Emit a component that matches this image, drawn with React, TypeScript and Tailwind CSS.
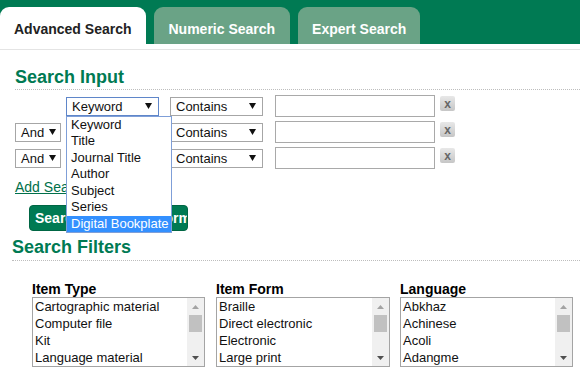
import React from "react";

const GREEN = "bg-[#007a53]";

function Tri({ className = "" }: { className?: string }) {
  return (
    <svg width="7" height="6" viewBox="0 0 7 6" className={className}>
      <path d="M0 0 H7 L3.5 6 Z" fill="#111" />
    </svg>
  );
}

function Select({
  label,
  w,
  focused = false,
  pr = "pr-[6px]",
}: {
  label: string;
  w: string;
  focused?: boolean;
  pr?: string;
}) {
  return (
    <div
      className={`${w} h-[19px] flex items-center justify-between bg-white border ${
        focused ? "border-[#5f86c9]" : "border-[#a6a6a6]"
      } pl-[5px] ${pr} text-[13px] leading-[15px] text-[#111]`}
    >
      <span>{label}</span>
      <Tri />
    </div>
  );
}

function XBtn() {
  return (
    <div className="w-[15px] h-[15px] self-start mt-[1px] rounded-[2px] bg-gradient-to-b from-[#e8e8e8] to-[#c6c6c6] flex items-center justify-center text-[12px] font-bold leading-none text-[#666]">
      x
    </div>
  );
}

function Row({ first, children }: { first?: React.ReactNode; children?: React.ReactNode }) {
  return (
    <div className="flex items-center h-[22px] relative">
      <div className="w-[51px] flex">{first}</div>
      {children}
    </div>
  );
}

function RowRest() {
  return (
    <>
      <div className="ml-[11px]">
        <Select label="Contains" w="w-[93px]" />
      </div>
      <div className="ml-[12px] w-[160px] h-[22px] border border-[#a9a9a9] bg-white" />
      <div className="ml-[5px] self-stretch flex">
        <XBtn />
      </div>
    </>
  );
}

function ListBox({ items, className = "" }: { items: string[]; className?: string }) {
  return (
    <div className={`w-[173px] h-[70px] border border-[#a4a4a4] flex bg-white ${className}`}>
      <div className="flex-1 pl-[2px] text-[13px] text-[#111]">
        {items.map((t) => (
          <div key={t} className="h-[17px] leading-[17px] whitespace-nowrap">
            {t}
          </div>
        ))}
      </div>
      <div className="w-[17px] bg-[#f0f0f0] flex flex-col items-center">
        <div className="h-[17px] flex items-center justify-center">
          <svg width="7" height="4" viewBox="0 0 7 4">
            <path d="M0 4 L3.5 0 L7 4 Z" fill="#a3a3a3" />
          </svg>
        </div>
        <div className="w-[13px] h-[17px] bg-[#c1c1c1]" />
        <div className="flex-1" />
        <div className="h-[17px] flex items-center justify-center">
          <svg width="7" height="4" viewBox="0 0 7 4">
            <path d="M0 0 L7 0 L3.5 4 Z" fill="#505050" />
          </svg>
        </div>
      </div>
    </div>
  );
}

export default function App() {
  const options = ["Keyword", "Title", "Journal Title", "Author", "Subject", "Series", "Digital Bookplate"];
  return (
    <div className="w-[580px] h-[386px] overflow-hidden bg-white font-['Liberation_Sans',Arial,sans-serif] text-[#111]">
      <div className={`h-[44px] ${GREEN} flex items-end gap-[8px]`}>
        <div className="h-[37px] px-[14px] pt-[14px] rounded-t-[9px] bg-white text-[#222] font-bold text-[14px] leading-[16px]">
          Advanced Search
        </div>
        <div className="h-[37px] px-[15px] pt-[14px] rounded-t-[9px] bg-[#6aa386] text-white font-bold text-[14px] leading-[16px]">
          Numeric Search
        </div>
        <div className="h-[37px] px-[14px] pt-[14px] rounded-t-[9px] bg-[#6aa386] text-white font-bold text-[14px] leading-[16px]">
          Expert Search
        </div>
      </div>
      <div className="h-[5px]" />
      <div className="h-px bg-[#e4e4e4]" />

      <div className="pl-[15px]">
        <h2 className="mt-[17px] text-[18px] leading-[21px] font-bold text-[#007a53] pb-[1px] border-b border-dotted border-[#bdbdbd]">
          Search Input
        </h2>

        <div className="mt-[5px] flex flex-col gap-[4px]">
          <Row>
            <div className="relative">
              <Select label="Keyword" w="w-[93px]" focused />
              <div className="absolute left-0 top-[19px] z-10 w-[106px] bg-white border border-[#7f9fd8] text-[13px] text-[#111]">
                {options.map((o, i) => (
                  <div
                    key={o}
                    className={`h-[16.5px] leading-[16.5px] pl-[4px] whitespace-nowrap ${
                      i === options.length - 1 ? "bg-[#3390ff] text-white" : ""
                    }`}
                  >
                    {o}
                  </div>
                ))}
              </div>
            </div>
            <RowRest />
          </Row>
          <Row first={<Select label="And" w="w-[46px]" pr="pr-[4px]" />}>
            <Select label="Title" w="w-[93px]" />
            <RowRest />
          </Row>
          <Row first={<Select label="And" w="w-[46px]" pr="pr-[4px]" />}>
            <Select label="Author" w="w-[93px]" />
            <RowRest />
          </Row>
        </div>

        <div className="mt-[10px] text-[14px] leading-[16px] text-[#00704a] underline">
          Add Search Row
        </div>

        <div className="mt-[10px] ml-[14px] flex">
          <div className="h-[26px] w-[159px] rounded-[4px] bg-[#007a53] border border-[#006644] text-white font-bold text-[14px] leading-[24px] pl-[5px] whitespace-nowrap overflow-hidden">
            Search Advanced Form
          </div>
        </div>

        <h2 className="mt-[6px] -ml-[3px] text-[18px] leading-[21px] font-bold text-[#007a53] pb-[2px] border-b border-dotted border-[#bdbdbd]">
          Search Filters
        </h2>

        <div className="mt-[21px] pl-[17px] flex">
          <div className="mr-[11px]">
            <div className="text-[14px] leading-[15px] font-bold text-black">Item Type</div>
            <ListBox items={["Cartographic material", "Computer file", "Kit", "Language material"]} />
          </div>
          <div className="mr-[10px]">
            <div className="text-[14px] leading-[15px] font-bold text-black">Item Form</div>
            <ListBox className="w-[174px]" items={["Braille", "Direct electronic", "Electronic", "Large print"]} />
          </div>
          <div>
            <div className="text-[14px] leading-[15px] font-bold text-black">Language</div>
            <ListBox items={["Abkhaz", "Achinese", "Acoli", "Adangme"]} />
          </div>
        </div>
      </div>
    </div>
  );
}
